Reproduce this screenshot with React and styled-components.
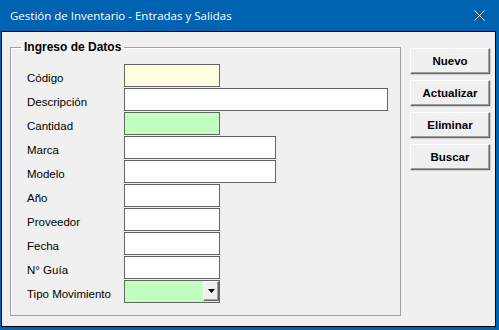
import React from "react";
import styled, { createGlobalStyle } from "styled-components";

const GlobalStyle = createGlobalStyle`
  html, body {
    margin: 0;
    padding: 0;
    background: #0063b1;
  }
  * { box-sizing: border-box; }
`;

const Window = styled.div`
  width: 499px;
  height: 330px;
  background: #0063b1;
  border-left: 1px solid #0063b1;
  border-right: 3px solid #0063b1;
  border-bottom: 3px solid #0063b1;
  display: flex;
  flex-direction: column;
`;

const TitleBar = styled.div`
  height: 31px;
  flex: none;
  display: flex;
  align-items: center;
  justify-content: space-between;
  padding: 0 11px 0 9px;
  color: #fff;
  font-family: "Open Sans", "Noto Sans", sans-serif;
  font-size: 11.5px;
`;

const CloseIcon = styled.svg`
  display: block;
`;

const Client = styled.div`
  flex: 1;
  background: #f0f0f0;
  border: 1px solid #000;
  display: flex;
  align-items: flex-start;
  padding: 8px 0 0 8px;
  font-family: "Liberation Sans", Arial, sans-serif;
  font-size: 11px;
  color: #000;
`;

const Frame = styled.fieldset`
  margin: 0;
  width: 391px;
  height: 276px;
  padding: 10px 10px 0 16px;
  border: 1px solid #a0a0a0;
  box-shadow: inset 1px 1px 0 #fff;
`;

const Legend = styled.legend`
  margin-left: -6px;
  padding: 0 3px;
  font-weight: bold;
  font-size: 12px;
  line-height: 14px;
`;

const Form = styled.div`
  display: grid;
  grid-template-columns: 97px auto;
  grid-auto-rows: 23px;
  row-gap: 1px;
`;

const Label = styled.span`
  align-self: end;
  padding-bottom: 2px;
  line-height: 13px;
  font-size: 11.5px;
  white-space: nowrap;
`;

const Field = styled.div`
  width: ${(p) => p.$w}px;
  height: 23px;
  background: ${(p) => p.$bg || "#fff"};
  border: 1px solid #646464;
  display: flex;
  justify-content: flex-end;
`;

const DropButton = styled.div`
  width: 16px;
  height: 20px;
  background: #f0f0f0;
  border-top: 1px solid #fff;
  border-left: 1px solid #fff;
  border-right: 1px solid #696969;
  border-bottom: 1px solid #696969;
  box-shadow: inset -1px -1px 0 #a0a0a0;
  display: flex;
  align-items: center;
  justify-content: center;
`;

const Buttons = styled.div`
  margin-left: 9px;
  padding-top: 8px;
  display: flex;
  flex-direction: column;
  gap: 6px;
`;

const Button = styled.button`
  width: 80px;
  height: 26px;
  margin: 0;
  padding: 0;
  background: #f0f0f0;
  border-top: 1px solid #fff;
  border-left: 1px solid #fff;
  border-right: 1px solid #696969;
  border-bottom: 1px solid #696969;
  box-shadow: inset -1px -1px 0 #a0a0a0, 1px 1px 0 #cfcfcf;
  font-family: "Liberation Sans", Arial, sans-serif;
  font-size: 11.5px;
  font-weight: bold;
  color: #000;
`;

const fields = [
  { label: "Código", w: 96, bg: "#ffffe1" },
  { label: "Descripción", w: 264 },
  { label: "Cantidad", w: 96, bg: "#c0ffc0" },
  { label: "Marca", w: 152 },
  { label: "Modelo", w: 152 },
  { label: "Año", w: 96 },
  { label: "Proveedor", w: 96 },
  { label: "Fecha", w: 96 },
  { label: "N° Guía", w: 96 },
  { label: "Tipo Movimiento", w: 96, bg: "#c0ffc0", combo: true },
];

export default function App() {
  return (
    <>
      <GlobalStyle />
      <Window>
        <TitleBar>
          <span>Gestión de Inventario - Entradas y Salidas</span>
          <CloseIcon width="11" height="11" viewBox="0 0 11 11">
            <path d="M0.5 0.5 L10.5 10.5 M10.5 0.5 L0.5 10.5" stroke="#fff" strokeWidth="1" />
          </CloseIcon>
        </TitleBar>
        <Client>
          <Frame>
            <Legend>Ingreso de Datos</Legend>
            <Form>
              {fields.map((f) => (
                <React.Fragment key={f.label}>
                  <Label>{f.label}</Label>
                  <Field $w={f.w} $bg={f.bg}>
                    {f.combo && (
                      <DropButton>
                        <svg width="7" height="4" viewBox="0 0 7 4">
                          <path d="M0 0 H7 L3.5 4 Z" fill="#000" />
                        </svg>
                      </DropButton>
                    )}
                  </Field>
                </React.Fragment>
              ))}
            </Form>
          </Frame>
          <Buttons>
            <Button>Nuevo</Button>
            <Button>Actualizar</Button>
            <Button>Eliminar</Button>
            <Button>Buscar</Button>
          </Buttons>
        </Client>
      </Window>
    </>
  );
}
